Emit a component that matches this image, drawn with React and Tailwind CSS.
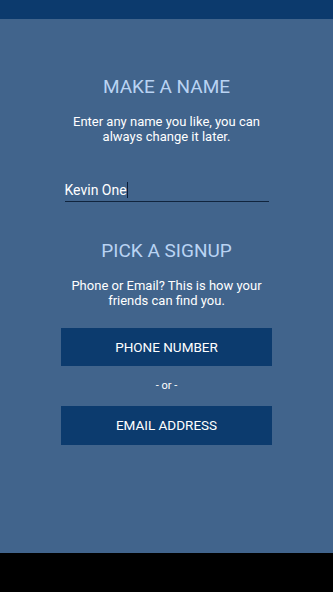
import React from "react";

const App = () => {
    return (
        <div className="w-[333px] h-[592px] flex flex-col bg-black" style={{ fontFamily: "Roboto, 'Liberation Sans', sans-serif" }}>

            {/* STATUS BAR */}
            <div className="h-[19px] bg-[#0c3a6d]"></div>

            {/* BODY */}
            <div className="h-[534px] bg-[#41648c] flex flex-col items-center">

                <h1 className="mt-[56px] text-[19px] leading-[24px] font-normal text-[#b9d3f3]">MAKE A NAME</h1>
                <p className="mt-[15px] text-[13px] leading-[15px] text-white text-center">
                    Enter any name you like, you can<br />always change it later.
                </p>

                <div className="mt-[37px] w-[204px] border-b border-[#10243d] pb-[2px] flex items-center">
                    <span className="text-[14px] leading-[18px] text-white">Kevin One</span>
                    <span className="w-[1px] h-[16px] bg-[#0c1f38]"></span>
                </div>

                <h1 className="mt-[37px] text-[19px] leading-[24px] font-normal text-[#b9d3f3]">PICK A SIGNUP</h1>
                <p className="mt-[15px] text-[13px] leading-[15px] text-white text-center">
                    Phone or Email? This is how your<br />friends can find you.
                </p>

                <button className="mt-[20px] w-[211px] h-[38px] bg-[#0c3b6e] text-white text-[13.5px]">PHONE NUMBER</button>

                <p className="mt-[13px] text-[11px] leading-[14px] text-white">- or -</p>

                <button className="mt-[13px] w-[211px] h-[39px] bg-[#0c3b6e] text-white text-[13.5px]">EMAIL ADDRESS</button>

            </div>

        </div>
    );
};

export default App;
